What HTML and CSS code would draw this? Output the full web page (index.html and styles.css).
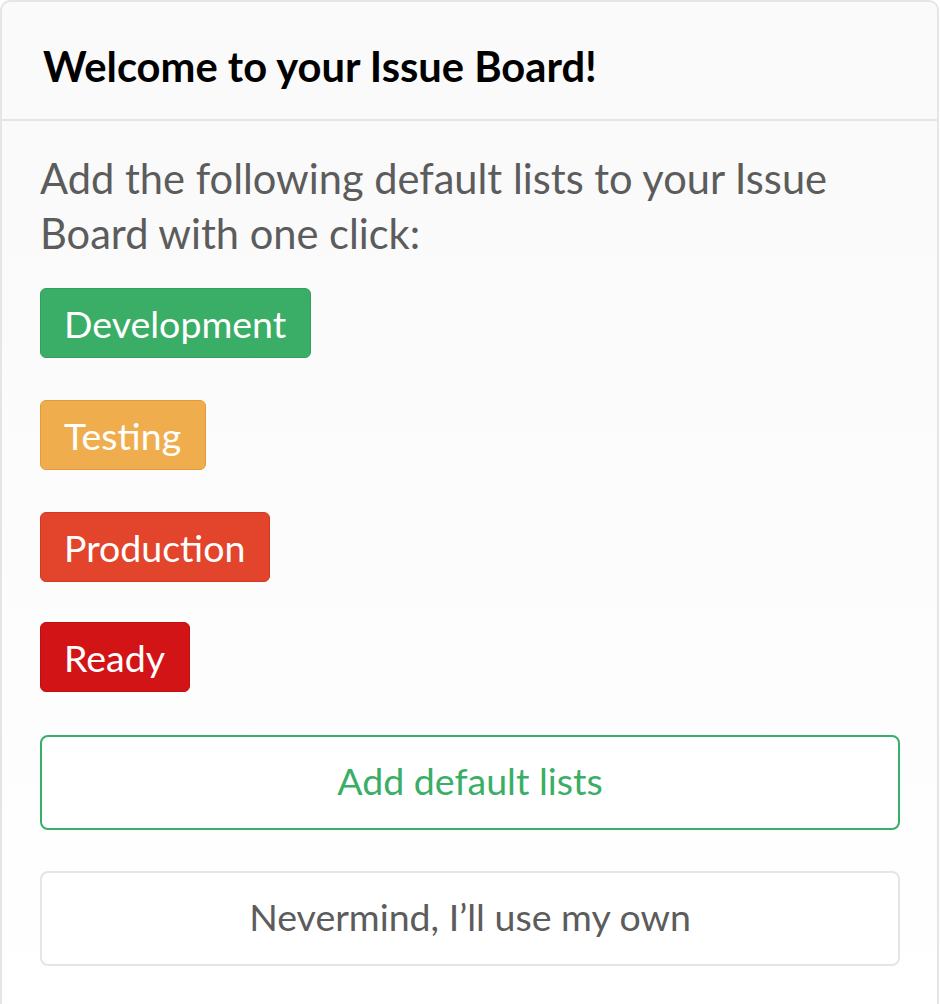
FILE: index.html
```html
<!DOCTYPE html>
<html>
<head>
<meta charset="utf-8">
<link rel="stylesheet" href="styles.css">
</head>
<body>
<div class="card">
  <div class="card-header">
    <h3 class="title">Welcome to your Issue Board!</h3>
  </div>
  <div class="card-body">
    <p class="intro">Add the following default lists to your Issue Board with one click:</p>
    <ul class="labels">
      <li><span class="label label-green">Development</span></li>
      <li><span class="label label-orange">Testing</span></li>
      <li><span class="label label-red">Production</span></li>
      <li class="last"><span class="label label-darkred">Ready</span></li>
    </ul>
    <button class="btn btn-create">Add default lists</button>
    <button class="btn btn-default">Nevermind, I’ll use my own</button>
  </div>
</div>
</body>
</html>
```

FILE: styles.css
```css
html, body {
  margin: 0;
  padding: 0;
  background: #ffffff;
}
body {
  font-family: "Lato", "Open Sans", sans-serif;
  width: 940px;
  height: 1004px;
  overflow: hidden;
}
.card {
  width: 935px;
  min-height: 1040px;
  border: 2px solid #e5e5e5;
  border-bottom: none;
  border-radius: 10px 10px 0 0;
  background: linear-gradient(#f9f9f9, #ffffff);
  box-sizing: content-box;
}
.card-header {
  box-sizing: border-box;
  height: 119px;
  background: #fafafa;
  border-bottom: 2px solid #e5e5e5;
  border-radius: 10px 10px 0 0;
  padding: 39px 0 0 41px;
}
.title {
  margin: 0;
  font-size: 41.7px;
  line-height: 50px;
  font-weight: 700;
  color: #000000;
}
.card-body {
  padding: 30px 37px 0 38px;
  display: flex;
  flex-direction: column;
}
.intro {
  margin: 0;
  font-size: 41.6px;
  line-height: 55px;
  color: #5c5c5c;
}
.labels {
  list-style: none;
  margin: 27px 0 0 0;
  padding: 0;
  display: flex;
  flex-direction: column;
  gap: 42px;
}
.labels li {
  display: flex;
}
.labels li.last {
  margin-top: -2px;
}
.label {
  display: inline-flex;
  align-items: center;
  height: 68px;
  padding: 0 24px 0 23px;
  border: 1px solid transparent;
  border-radius: 6px;
  color: #ffffff;
  font-size: 37.5px;
}
.label-green { background: #3aae67; border-color: #31a05c; }
.label-orange { background: #f0ad4e; border-color: #e49a38; }
.label-red { background: #e2452b; border-color: #d23a22; }
.label-darkred { background: #d31417; border-color: #c00f12; }
.btn {
  font-family: inherit;
  font-size: 37.5px;
  height: 95px;
  width: 860px;
  border-radius: 8px;
  background: #ffffff;
  cursor: pointer;
  padding: 0 0 4px 0;
}
.btn-create {
  margin-top: 43px;
  border: 2px solid #3aae67;
  color: #3aae67;
}
.btn-default {
  margin-top: 41px;
  border: 2px solid #e5e5e5;
  color: #5c5c5c;
}
```
